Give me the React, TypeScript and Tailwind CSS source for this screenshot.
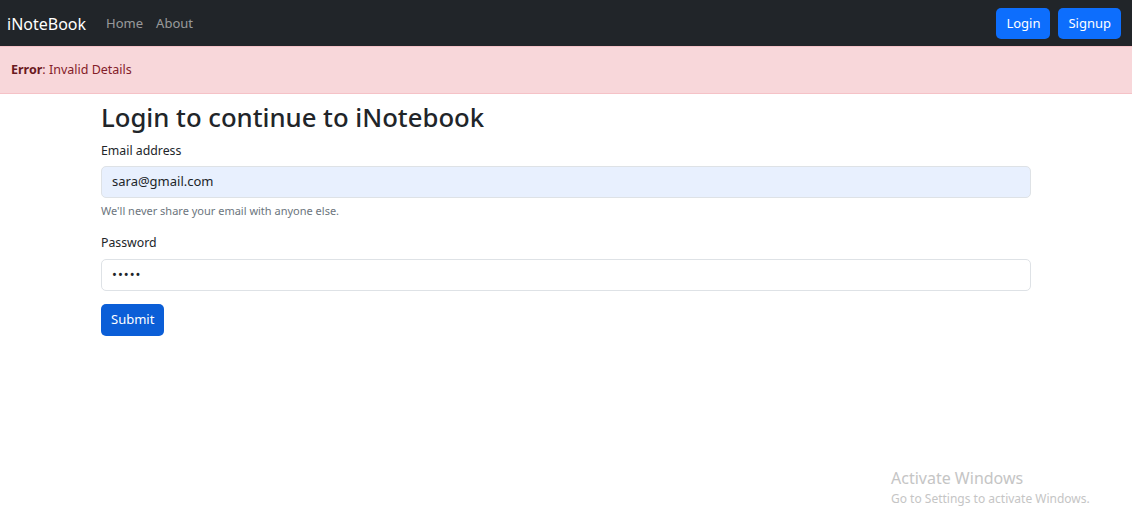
export default function App() {
  const font = "font-['Segoe_UI','Noto_Sans',sans-serif]";
  return (
    <div className={`min-h-[532px] w-full bg-white ${font} text-[#212529] relative`}>
      <nav className="h-[46px] bg-[#212529] flex items-center pl-[7px] pr-[11px]">
        <span className="text-white text-[16px] leading-none pt-[1px]">iNoteBook</span>
        <div className="flex gap-[13px] ml-[20px] text-[13px] text-[rgba(255,255,255,0.55)] pt-[2px]">
          <span>Home</span>
          <span>About</span>
        </div>
        <div className="ml-auto flex gap-[8px] pt-[1px]">
          <button className="h-[31px] px-[10px] rounded-[5px] bg-[#0d6efd] text-white text-[13px]">Login</button>
          <button className="h-[31px] px-[10px] rounded-[5px] bg-[#0d6efd] text-white text-[13px]">Signup</button>
        </div>
      </nav>
      <div className="h-[48px] bg-[#f8d7da] border-y border-[#f5c2c7] flex items-center pl-[11px] text-[12.5px] text-[#842029]">
        <strong className="font-bold text-[#6a1a21]">Error</strong>: Invalid Details
      </div>
      <div className="ml-[101px] w-[930px] pt-[9px]">
        <h2 className="text-[25.7px] font-medium leading-[1.2] h-[33px] text-[#212529]">Login to continue to iNotebook</h2>
        <label className="block mt-[5px] text-[12.3px] leading-[20px]">Email address</label>
        <div className="mt-[5px] h-[32px] rounded-[5px] border border-[#dee2e6] bg-[#e8f0fe] flex items-center px-[10px] text-[13px]">sara@gmail.com</div>
        <div className="mt-[5px] text-[11px] text-[#6c757d]">We'll never share your email with anyone else.</div>
        <label className="block mt-[13px] text-[12.3px] leading-[20px]">Password</label>
        <div className="mt-[6px] h-[32px] rounded-[5px] border border-[#dee2e6] bg-white flex items-center px-[10px] text-[13px] tracking-[1px]">•••••</div>
        <button className="mt-[13px] h-[32px] px-[10px] rounded-[5px] bg-[#0b5ed7] text-white text-[13px]">Submit</button>
      </div>
      <div className="absolute left-[891px] top-[468px] text-[#c5c5c5]">
        <div className="text-[16px] leading-[20px]">Activate Windows</div>
        <div className="text-[12px] leading-[16px] mt-[3px]">Go to Settings to activate Windows.</div>
      </div>
    </div>
  );
}
